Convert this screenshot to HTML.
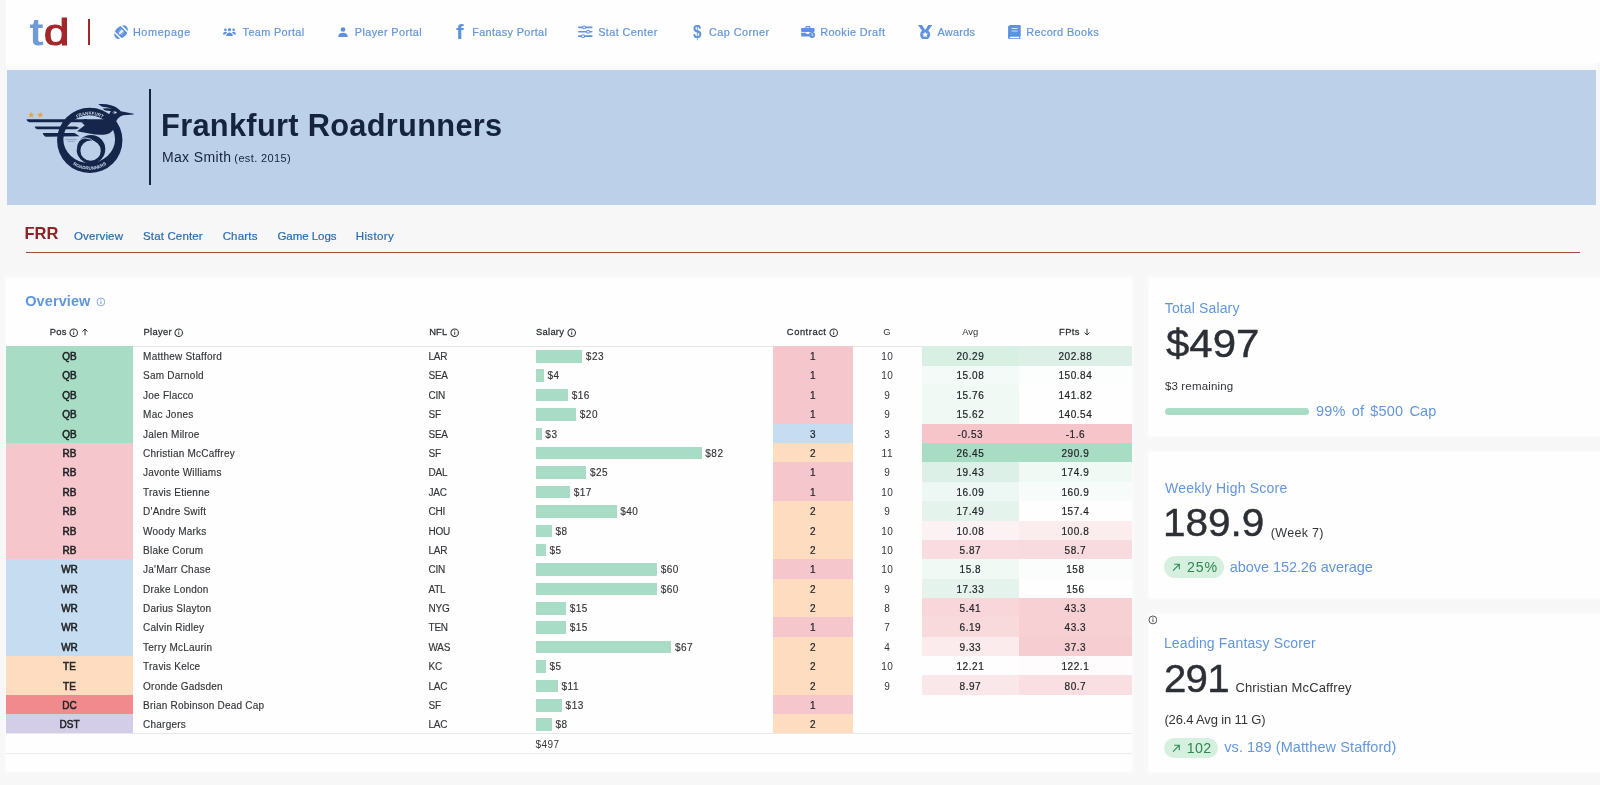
<!DOCTYPE html>
<html lang="en"><head><meta charset="utf-8"><title>Frankfurt Roadrunners</title>
<style>
html,body{margin:0;padding:0;}
body{width:1600px;height:785px;overflow:hidden;background:#f7f7f8;position:relative;font-family:"Liberation Sans",Arial,sans-serif;}
#page{position:absolute;left:0;top:0;width:1600px;height:785px;will-change:transform;}
.t{position:absolute;white-space:nowrap;display:block;}
.b{position:absolute;display:block;}
</style></head><body><div id="page">
<div class="b" style="left:6.00px;top:0.00px;width:1594.00px;height:63.00px;background:#fefefe;"></div>
<div class="b" style="left:6.00px;top:63.00px;width:1591.00px;height:6.50px;background:linear-gradient(#fdfdfd,#f9f8fa);"></div>
<span class="t" style="left:29.8px;top:8.6px;font-size:37px;line-height:48px;transform:scaleX(1.25);transform-origin:0 0;letter-spacing:0.7px;"><span style="color:#6f9ad6;-webkit-text-stroke:1px #6f9ad6">t</span><span style="color:#a3262a;-webkit-text-stroke:1px #a3262a">d</span></span>
<div class="b" style="left:88.00px;top:19.00px;width:2.00px;height:25.60px;background:#a3282a;"></div>
<span class="t" style="top:24.52px;left:132.95px;font-size:10.9px;line-height:14.17px;color:#6296dc;font-weight:normal;letter-spacing:0.570px;-webkit-text-stroke:0.2px #6296dc;">Homepage</span>
<span class="t" style="top:24.52px;left:242.60px;font-size:10.9px;line-height:14.17px;color:#6296dc;font-weight:normal;letter-spacing:0.347px;-webkit-text-stroke:0.2px #6296dc;">Team Portal</span>
<span class="t" style="top:24.52px;left:354.85px;font-size:10.9px;line-height:14.17px;color:#6296dc;font-weight:normal;letter-spacing:0.373px;-webkit-text-stroke:0.2px #6296dc;">Player Portal</span>
<span class="t" style="top:24.52px;left:472.15px;font-size:10.9px;line-height:14.17px;color:#6296dc;font-weight:normal;letter-spacing:0.346px;-webkit-text-stroke:0.2px #6296dc;">Fantasy Portal</span>
<span class="t" style="top:24.52px;left:598.15px;font-size:10.9px;line-height:14.17px;color:#6296dc;font-weight:normal;letter-spacing:0.410px;-webkit-text-stroke:0.2px #6296dc;">Stat Center</span>
<span class="t" style="top:24.52px;left:709.05px;font-size:10.9px;line-height:14.17px;color:#6296dc;font-weight:normal;letter-spacing:0.421px;-webkit-text-stroke:0.2px #6296dc;">Cap Corner</span>
<span class="t" style="top:24.52px;left:820.15px;font-size:10.9px;line-height:14.17px;color:#6296dc;font-weight:normal;letter-spacing:0.395px;-webkit-text-stroke:0.2px #6296dc;">Rookie Draft</span>
<span class="t" style="top:24.52px;left:937.50px;font-size:10.9px;line-height:14.17px;color:#6296dc;font-weight:normal;letter-spacing:0.260px;-webkit-text-stroke:0.2px #6296dc;">Awards</span>
<span class="t" style="top:24.52px;left:1026.15px;font-size:10.9px;line-height:14.17px;color:#6296dc;font-weight:normal;letter-spacing:0.376px;-webkit-text-stroke:0.2px #6296dc;">Record Books</span>
<svg class="b" style="left:113.30px;top:24.10px;" width="16.20" height="16.20" viewBox="0 0 28 28"><g transform="rotate(-45 14 14)"><ellipse cx="14" cy="14" rx="13.6" ry="9.6" fill="#5f92de"/><rect x="4.600" y="3" width="2.600" height="22" fill="#fefefe"/><rect x="20.800" y="3" width="2.600" height="22" fill="#fefefe"/><rect x="9.300" y="12.800" width="9.400" height="2.400" fill="#e8f0fb"/><rect x="10.600" y="10.600" width="1.700" height="6.800" fill="#e8f0fb"/><rect x="13.150" y="10.600" width="1.700" height="6.800" fill="#e8f0fb"/><rect x="15.700" y="10.600" width="1.700" height="6.800" fill="#e8f0fb"/></g></svg>
<svg class="b" style="left:223.00px;top:28.00px;" width="13.00" height="8.40" viewBox="0 0 26 16.800"><g fill="#5f92de"><circle cx="13" cy="3.300" r="3.100"/><path d="M6.300 16.500c0-4.600 2.700-7.300 6.700-7.300s6.700 2.700 6.700 7.300z"/><circle cx="4.700" cy="3.500" r="2.700"/><path d="M0 13.200c0-3.600 1.900-5.600 4.700-5.600 1.500 0 2.700.5 3.500 1.400-1.900 1.100-3 2.600-3.400 4.200z"/><circle cx="21.300" cy="3.500" r="2.700"/><path d="M26 13.200c0-3.600-1.900-5.600-4.700-5.600-1.500 0-2.700.5-3.500 1.400 1.900 1.100 3 2.600 3.400 4.200z"/></g></svg>
<svg class="b" style="left:338.00px;top:27.20px;" width="10.00" height="10.00" viewBox="0 0 20 20"><g fill="#5f92de"><circle cx="10" cy="5" r="4.6"/><path d="M0.500 20c0-6 3.800-8.600 9.500-8.600s9.500 2.600 9.500 8.600z"/></g></svg>
<span class="t" style="left:455.6px;top:21.1px;font-size:20.5px;line-height:22px;font-weight:bold;color:#5f92de;transform:scaleX(1.12);transform-origin:0 0">f</span>
<svg class="b" style="left:578.40px;top:25.30px;" width="14.60" height="13.50" viewBox="0 0 30 27"><g stroke="#5f92de" stroke-width="3.2" fill="none" stroke-linecap="round"><path d="M1.600 4.500h26.800M1.600 13.500h26.800M1.600 22.500h26.800"/></g><g fill="#fefefe" stroke="#5f92de" stroke-width="2.200"><circle cx="12.500" cy="4.500" r="3"/><circle cx="20.500" cy="13.500" r="3"/><circle cx="10.500" cy="22.500" r="3"/></g></svg>
<span class="t" style="left:692.6px;top:22.1px;font-size:17.8px;line-height:20px;font-weight:bold;color:#5f92de;transform:scaleX(0.86);transform-origin:0 0">$</span>
<svg class="b" style="left:801.40px;top:26.20px;" width="14.20" height="12.00" viewBox="0 0 28 24"><g fill="#5f92de"><path d="M8.500 4V2.200C8.500 1 9.400 0 10.600 0h5.800c1.200 0 2.100 1 2.100 2.200V4h-2.300V2.300h-5.400V4z"/><rect x="0" y="4" width="27" height="8" rx="2"/><path d="M0 13.500h10.500v2.500h6v-2.500h4c-3 1.500-4.500 4-4 7.500H2c-1.100 0-2-.9-2-2z"/><circle cx="22" cy="18" r="6"/></g><path d="M22 14.500v3.800l2.500 1.500" stroke="#fefefe" stroke-width="1.600" fill="none"/></svg>
<svg class="b" style="left:917.70px;top:24.60px;" width="14.30" height="14.70" viewBox="0 0 29 30"><g fill="#5f92de"><path d="M0 0h8l6.500 10-5.500 3.500z"/><path d="M29 0h-8l-6.500 10 5.500 3.500z"/><circle cx="14.500" cy="19.700" r="10.200"/></g><path d="M14.500 13.600l1.900 3.900 4.300.5-3.200 2.900.9 4.300-3.900-2.200-3.900 2.200.9-4.300-3.200-2.900 4.300-.5z" fill="#fefefe"/></svg>
<svg class="b" style="left:1008.40px;top:24.60px;" width="12.80" height="14.70" viewBox="0 0 26 30"><path fill="#5f92de" d="M5 0h19c1.100 0 2 .9 2 2v20c0 .8-.5 1.500-1.200 1.800v3.400c.7.2 1.200.8 1.200 1.400 0 .8-.6 1.400-1.400 1.400H5c-2.800 0-5-2.200-5-5V5c0-2.800 2.200-5 5-5z"/><path fill="#fefefe" d="M5 24.200h17.800v3H5c-.8 0-1.500-.7-1.500-1.500s.7-1.500 1.500-1.500z"/><rect x="7" y="6" width="13" height="2.200" rx="1" fill="#cfe0f7"/><rect x="7" y="11" width="13" height="2.200" rx="1" fill="#cfe0f7"/></svg>
<div class="b" style="left:7.00px;top:69.50px;width:1589.00px;height:135.50px;background:#bcd1e9;"></div>
<div class="b" style="left:148.50px;top:89.00px;width:2.00px;height:96.00px;background:#15233f;"></div>
<span class="t" style="top:106.38px;left:161.07px;font-size:30.8px;line-height:40.04px;color:#15233f;font-weight:bold;letter-spacing:0.288px;">Frankfurt Roadrunners</span>
<span class="t" style="top:148.10px;left:161.91px;font-size:14px;line-height:18.2px;color:#15233f;font-weight:normal;letter-spacing:0.382px;">Max Smith</span>
<span class="t" style="top:150.65px;left:234.35px;font-size:11px;line-height:14.3px;color:#15233f;font-weight:normal;letter-spacing:0.373px;">(est. 2015)</span>
<svg class="b" style="left:20px;top:95px" width="120" height="85" viewBox="0 0 1108 785">
<defs>
<path id="arcTop" d="M480,246 A240,240 0 0 1 808,246"/>
<path id="arcBot" d="M446,605 A274,274 0 0 0 842,605"/>
</defs>
<g fill="#15264a">
<!-- ring: outer circle minus inner ellipse -->
<path fill-rule="evenodd" d="M644,117 A302,302 0 1 0 644.100,721 A302,302 0 1 0 644,117 Z M639,188 A239,220 0 1 1 638.900,628 A239,220 0 1 1 639,188 Z"/>
<!-- swirl -->
<path fill-rule="evenodd" d="M655,368.500 A132.500,132.500 0 1 0 655.100,633.500 A132.500,132.500 0 1 0 655,368.500 Z M652,420 A94,94 0 1 1 651.900,608 A94,94 0 1 1 652,420 Z"/>
</g>
<path d="M693,437 Q655,398 600,396 Q548,404 528,455 Q520,480 523,505" fill="none" stroke="#bcd1e9" stroke-width="9"/>
<g fill="#15264a">
<!-- tail stripes -->
<path d="M60,223 L620,223 L620,252 L86,252 Q62,246 60,223 Z"/>
<path d="M135,291 L516,291 L549,304 L516,317 L160,317 Q138,311 135,291 Z"/>
<path d="M210,352 L503,352 L549,382 L236,385 Q212,378 210,352 Z"/>
<!-- body / neck / head / beak -->
<path d="M587,223 L775,223 Q815,200 838,152 Q855,120 890,122 Q915,128 930,150 L1050,174 Q1052,178 1046,180 L952,188 Q905,205 886,246 Q880,300 859,323 Q830,360 788,365 Q720,372 639,356 L527,334 L598,280 L565,252 L587,252 Z"/>
<!-- crest -->
<path d="M722,84 Q835,74 905,124 L868,142 Q835,112 760,108 Q740,100 722,84 Z"/>
<path d="M764,124 Q820,116 872,132 L850,152 Q815,142 790,142 Q775,136 764,124 Z"/>
</g>
<!-- eye -->
<ellipse cx="874" cy="161" rx="19" ry="9" fill="#e6edf6"/>
<circle cx="866" cy="161" r="6" fill="#15264a"/>
<!-- stars -->
<g fill="#e6a544">
<path d="M103,155 l8,19 20,2 -15,14 5,20 -18,-11 -18,11 5,-20 -15,-14 20,-2z"/>
<path d="M187,155 l8,19 20,2 -15,14 5,20 -18,-11 -18,11 5,-20 -15,-14 20,-2z"/>
</g>
<g font-family="'Liberation Sans',Arial,sans-serif" font-weight="bold" fill="#c9d9ec" text-anchor="middle">
<text font-size="40" letter-spacing="0"><textPath href="#arcTop" startOffset="50%">FRANKFURT</textPath></text>
<text font-size="42" letter-spacing="0"><textPath href="#arcBot" startOffset="50%">ROADRUNNERS</textPath></text>
</g>
<g stroke="#6d7f9f" stroke-width="5"><path d="M415,410 H525"/><path d="M440,428 H505"/></g>
</svg>

<span class="t" style="top:223.28px;left:24.47px;font-size:16.5px;line-height:21.45px;color:#8c2426;font-weight:bold;letter-spacing:-0.032px;">FRR</span>
<span class="t" style="top:228.62px;left:74.00px;font-size:11.5px;line-height:14.95px;color:#2b6cb0;font-weight:normal;letter-spacing:0.147px;-webkit-text-stroke:0.2px #2b6cb0;">Overview</span>
<span class="t" style="top:228.62px;left:143.00px;font-size:11.5px;line-height:14.95px;color:#2b6cb0;font-weight:normal;letter-spacing:0.151px;-webkit-text-stroke:0.2px #2b6cb0;">Stat Center</span>
<span class="t" style="top:228.62px;left:222.65px;font-size:11.5px;line-height:14.95px;color:#2b6cb0;font-weight:normal;letter-spacing:0.176px;-webkit-text-stroke:0.2px #2b6cb0;">Charts</span>
<span class="t" style="top:228.62px;left:277.45px;font-size:11.5px;line-height:14.95px;color:#2b6cb0;font-weight:normal;letter-spacing:-0.037px;-webkit-text-stroke:0.2px #2b6cb0;">Game Logs</span>
<span class="t" style="top:228.62px;left:355.80px;font-size:11.5px;line-height:14.95px;color:#2b6cb0;font-weight:normal;letter-spacing:0.353px;-webkit-text-stroke:0.2px #2b6cb0;">History</span>
<div class="b" style="left:25.50px;top:252.00px;width:1554.50px;height:1.00px;background:#a9463e;"></div>
<div class="b" style="left:5.60px;top:278.00px;width:1126.80px;height:493.30px;background:#fefefe;box-shadow:0 0 5px 2px rgba(254,254,254,0.75);"></div>
<div class="b" style="left:1149.00px;top:278.00px;width:455.00px;height:157.60px;background:#fefefe;box-shadow:0 0 5px 2px rgba(254,254,254,0.75);"></div>
<div class="b" style="left:1149.00px;top:452.40px;width:455.00px;height:145.20px;background:#fefefe;box-shadow:0 0 5px 2px rgba(254,254,254,0.75);"></div>
<div class="b" style="left:1149.00px;top:613.80px;width:455.00px;height:157.80px;background:#fefefe;box-shadow:0 0 5px 2px rgba(254,254,254,0.75);"></div>
<span class="t" style="top:291.97px;left:25.25px;font-size:14.5px;line-height:18.85px;color:#6296dc;font-weight:bold;letter-spacing:0.088px;">Overview</span>
<svg class="b" style="left:95.50px;top:297.10px" width="9.80" height="9.80" viewBox="0 0 20 20"><circle cx="10" cy="10" r="8" fill="none" stroke="#7ea3dc" stroke-width="1.84"/><rect x="9" y="8.800" width="2.100" height="5.600" fill="#7ea3dc"/><circle cx="10.050" cy="6.100" r="1.300" fill="#7ea3dc"/></svg>
<span class="t" style="top:326.19px;left:49.75px;font-size:9.4px;line-height:12.22px;color:#2f3237;font-weight:normal;letter-spacing:0.276px;-webkit-text-stroke:0.28px #2f3237;">Pos</span>
<svg class="b" style="left:68.90px;top:327.60px" width="9.40" height="9.40" viewBox="0 0 20 20"><circle cx="10" cy="10" r="8" fill="none" stroke="#2f3237" stroke-width="2.23"/><rect x="9" y="8.800" width="2.100" height="5.600" fill="#2f3237"/><circle cx="10.050" cy="6.100" r="1.300" fill="#2f3237"/></svg>
<svg class="b" style="left:81.9px;top:327.90px" width="6" height="8" viewBox="0 0 6 8"><path d="M3 7.300V1M0.500 3.500L3 1l2.500 2.500" fill="none" stroke="#2f3237" stroke-width="1"/></svg>
<span class="t" style="top:326.19px;left:143.45px;font-size:9.4px;line-height:12.22px;color:#2f3237;font-weight:normal;letter-spacing:0.307px;-webkit-text-stroke:0.28px #2f3237;">Player</span>
<svg class="b" style="left:173.80px;top:327.60px" width="9.40" height="9.40" viewBox="0 0 20 20"><circle cx="10" cy="10" r="8" fill="none" stroke="#2f3237" stroke-width="2.23"/><rect x="9" y="8.800" width="2.100" height="5.600" fill="#2f3237"/><circle cx="10.050" cy="6.100" r="1.300" fill="#2f3237"/></svg>
<span class="t" style="top:326.19px;left:429.25px;font-size:9.4px;line-height:12.22px;color:#2f3237;font-weight:normal;letter-spacing:0.085px;-webkit-text-stroke:0.28px #2f3237;">NFL</span>
<svg class="b" style="left:449.80px;top:327.60px" width="9.40" height="9.40" viewBox="0 0 20 20"><circle cx="10" cy="10" r="8" fill="none" stroke="#2f3237" stroke-width="2.23"/><rect x="9" y="8.800" width="2.100" height="5.600" fill="#2f3237"/><circle cx="10.050" cy="6.100" r="1.300" fill="#2f3237"/></svg>
<span class="t" style="top:326.19px;left:536.10px;font-size:9.4px;line-height:12.22px;color:#2f3237;font-weight:normal;letter-spacing:0.251px;-webkit-text-stroke:0.28px #2f3237;">Salary</span>
<svg class="b" style="left:566.50px;top:327.60px" width="9.40" height="9.40" viewBox="0 0 20 20"><circle cx="10" cy="10" r="8" fill="none" stroke="#2f3237" stroke-width="2.23"/><rect x="9" y="8.800" width="2.100" height="5.600" fill="#2f3237"/><circle cx="10.050" cy="6.100" r="1.300" fill="#2f3237"/></svg>
<span class="t" style="top:326.19px;left:786.85px;font-size:9.4px;line-height:12.22px;color:#2f3237;font-weight:normal;letter-spacing:0.527px;-webkit-text-stroke:0.28px #2f3237;">Contract</span>
<svg class="b" style="left:828.70px;top:327.60px" width="9.40" height="9.40" viewBox="0 0 20 20"><circle cx="10" cy="10" r="8" fill="none" stroke="#2f3237" stroke-width="2.23"/><rect x="9" y="8.800" width="2.100" height="5.600" fill="#2f3237"/><circle cx="10.050" cy="6.100" r="1.300" fill="#2f3237"/></svg>
<span class="t" style="top:326.19px;left:737.00px;width:300px;text-align:center;font-size:9.4px;line-height:12.22px;color:#2f3237;font-weight:normal;letter-spacing:0.000px;">G</span>
<span class="t" style="top:326.19px;left:820.20px;width:300px;text-align:center;font-size:9.4px;line-height:12.22px;color:#2f3237;font-weight:normal;letter-spacing:0.000px;">Avg</span>
<span class="t" style="top:326.19px;left:1059.05px;font-size:9.4px;line-height:12.22px;color:#2f3237;font-weight:normal;letter-spacing:0.409px;-webkit-text-stroke:0.28px #2f3237;">FPts</span>
<svg class="b" style="left:1083.8px;top:328.40px" width="6" height="8" viewBox="0 0 6 8"><path d="M3 0.700V7M0.500 4.500L3 7l2.500-2.500" fill="none" stroke="#2f3237" stroke-width="1"/></svg>
<div class="b" style="left:5.60px;top:346.00px;width:1126.40px;height:1.00px;background:#e6e6e6;"></div>
<div class="b" style="left:5.60px;top:346.00px;width:127.60px;height:20.00px;background:#a8dcc5;"></div>
<span class="t" style="top:350.00px;left:-80.50px;width:300px;text-align:center;font-size:10px;line-height:13.0px;color:#1f2226;font-weight:normal;letter-spacing:0.000px;-webkit-text-stroke:0.55px #1f2226;">QB</span>
<span class="t" style="top:350.00px;left:143.10px;font-size:10px;line-height:13.0px;color:#333539;font-weight:normal;letter-spacing:0.000px;letter-spacing:0.22px;-webkit-text-stroke:0.15px #333539;">Matthew Stafford</span>
<span class="t" style="top:350.00px;left:428.60px;font-size:10px;line-height:13.0px;color:#333539;font-weight:normal;letter-spacing:0.000px;letter-spacing:-0.3px;-webkit-text-stroke:0.15px #333539;">LAR</span>
<div class="b" style="left:535.80px;top:350.00px;width:46.55px;height:12.50px;background:#a9dcc6;"></div>
<span class="t" style="top:350.00px;left:585.85px;font-size:10px;line-height:13.0px;color:#333539;font-weight:normal;letter-spacing:0.000px;letter-spacing:0.5px;-webkit-text-stroke:0.15px #333539;">$23</span>
<div class="b" style="left:773.00px;top:346.00px;width:79.60px;height:20.00px;background:#f5c7cc;"></div>
<span class="t" style="top:350.00px;left:662.70px;width:300px;text-align:center;font-size:10px;line-height:13.0px;color:#1f2226;font-weight:normal;letter-spacing:0.000px;-webkit-text-stroke:0.22px #1f2226;">1</span>
<span class="t" style="top:350.00px;left:737.30px;width:300px;text-align:center;font-size:10px;line-height:13.0px;color:#333539;font-weight:normal;letter-spacing:0.000px;letter-spacing:0.55px;">10</span>
<div class="b" style="left:921.50px;top:346.00px;width:97.70px;height:20.00px;background:#d8efe4;"></div>
<div class="b" style="left:1019.20px;top:346.00px;width:112.50px;height:20.00px;background:#dcf0e7;"></div>
<span class="t" style="top:350.00px;left:820.40px;width:300px;text-align:center;font-size:10px;line-height:13.0px;color:#1f2226;font-weight:normal;letter-spacing:0.000px;-webkit-text-stroke:0.2px #1f2226;letter-spacing:0.55px;">20.29</span>
<span class="t" style="top:350.00px;left:925.40px;width:300px;text-align:center;font-size:10px;line-height:13.0px;color:#1f2226;font-weight:normal;letter-spacing:0.000px;-webkit-text-stroke:0.2px #1f2226;letter-spacing:0.55px;">202.88</span>
<div class="b" style="left:5.60px;top:366.00px;width:127.60px;height:19.00px;background:#a8dcc5;"></div>
<span class="t" style="top:369.39px;left:-80.50px;width:300px;text-align:center;font-size:10px;line-height:13.0px;color:#1f2226;font-weight:normal;letter-spacing:0.000px;-webkit-text-stroke:0.55px #1f2226;">QB</span>
<span class="t" style="top:369.39px;left:143.10px;font-size:10px;line-height:13.0px;color:#333539;font-weight:normal;letter-spacing:0.000px;letter-spacing:0.22px;-webkit-text-stroke:0.15px #333539;">Sam Darnold</span>
<span class="t" style="top:369.39px;left:428.60px;font-size:10px;line-height:13.0px;color:#333539;font-weight:normal;letter-spacing:0.000px;letter-spacing:-0.3px;-webkit-text-stroke:0.15px #333539;">SEA</span>
<div class="b" style="left:535.80px;top:369.39px;width:8.10px;height:12.50px;background:#a9dcc6;"></div>
<span class="t" style="top:369.39px;left:547.40px;font-size:10px;line-height:13.0px;color:#333539;font-weight:normal;letter-spacing:0.000px;letter-spacing:0.5px;-webkit-text-stroke:0.15px #333539;">$4</span>
<div class="b" style="left:773.00px;top:366.00px;width:79.60px;height:19.00px;background:#f5c7cc;"></div>
<span class="t" style="top:369.39px;left:662.70px;width:300px;text-align:center;font-size:10px;line-height:13.0px;color:#1f2226;font-weight:normal;letter-spacing:0.000px;-webkit-text-stroke:0.22px #1f2226;">1</span>
<span class="t" style="top:369.39px;left:737.30px;width:300px;text-align:center;font-size:10px;line-height:13.0px;color:#333539;font-weight:normal;letter-spacing:0.000px;letter-spacing:0.55px;">10</span>
<div class="b" style="left:921.50px;top:366.00px;width:97.70px;height:19.00px;background:#f4faf7;"></div>
<div class="b" style="left:1019.20px;top:366.00px;width:112.50px;height:19.00px;background:#fcfdfd;"></div>
<span class="t" style="top:369.39px;left:820.40px;width:300px;text-align:center;font-size:10px;line-height:13.0px;color:#1f2226;font-weight:normal;letter-spacing:0.000px;-webkit-text-stroke:0.2px #1f2226;letter-spacing:0.55px;">15.08</span>
<span class="t" style="top:369.39px;left:925.40px;width:300px;text-align:center;font-size:10px;line-height:13.0px;color:#1f2226;font-weight:normal;letter-spacing:0.000px;-webkit-text-stroke:0.2px #1f2226;letter-spacing:0.55px;">150.84</span>
<div class="b" style="left:5.60px;top:385.00px;width:127.60px;height:19.00px;background:#a8dcc5;"></div>
<span class="t" style="top:388.78px;left:-80.50px;width:300px;text-align:center;font-size:10px;line-height:13.0px;color:#1f2226;font-weight:normal;letter-spacing:0.000px;-webkit-text-stroke:0.55px #1f2226;">QB</span>
<span class="t" style="top:388.78px;left:143.10px;font-size:10px;line-height:13.0px;color:#333539;font-weight:normal;letter-spacing:0.000px;letter-spacing:0.22px;-webkit-text-stroke:0.15px #333539;">Joe Flacco</span>
<span class="t" style="top:388.78px;left:428.60px;font-size:10px;line-height:13.0px;color:#333539;font-weight:normal;letter-spacing:0.000px;letter-spacing:-0.3px;-webkit-text-stroke:0.15px #333539;">CIN</span>
<div class="b" style="left:535.80px;top:388.78px;width:32.38px;height:12.50px;background:#a9dcc6;"></div>
<span class="t" style="top:388.78px;left:571.68px;font-size:10px;line-height:13.0px;color:#333539;font-weight:normal;letter-spacing:0.000px;letter-spacing:0.5px;-webkit-text-stroke:0.15px #333539;">$16</span>
<div class="b" style="left:773.00px;top:385.00px;width:79.60px;height:19.00px;background:#f5c7cc;"></div>
<span class="t" style="top:388.78px;left:662.70px;width:300px;text-align:center;font-size:10px;line-height:13.0px;color:#1f2226;font-weight:normal;letter-spacing:0.000px;-webkit-text-stroke:0.22px #1f2226;">1</span>
<span class="t" style="top:388.78px;left:737.30px;width:300px;text-align:center;font-size:10px;line-height:13.0px;color:#333539;font-weight:normal;letter-spacing:0.000px;letter-spacing:0.55px;">9</span>
<div class="b" style="left:921.50px;top:385.00px;width:97.70px;height:19.00px;background:#f1f9f5;"></div>
<div class="b" style="left:1019.20px;top:385.00px;width:112.50px;height:19.00px;background:#fefefe;"></div>
<span class="t" style="top:388.78px;left:820.40px;width:300px;text-align:center;font-size:10px;line-height:13.0px;color:#1f2226;font-weight:normal;letter-spacing:0.000px;-webkit-text-stroke:0.2px #1f2226;letter-spacing:0.55px;">15.76</span>
<span class="t" style="top:388.78px;left:925.40px;width:300px;text-align:center;font-size:10px;line-height:13.0px;color:#1f2226;font-weight:normal;letter-spacing:0.000px;-webkit-text-stroke:0.2px #1f2226;letter-spacing:0.55px;">141.82</span>
<div class="b" style="left:5.60px;top:404.00px;width:127.60px;height:20.00px;background:#a8dcc5;"></div>
<span class="t" style="top:408.17px;left:-80.50px;width:300px;text-align:center;font-size:10px;line-height:13.0px;color:#1f2226;font-weight:normal;letter-spacing:0.000px;-webkit-text-stroke:0.55px #1f2226;">QB</span>
<span class="t" style="top:408.17px;left:143.10px;font-size:10px;line-height:13.0px;color:#333539;font-weight:normal;letter-spacing:0.000px;letter-spacing:0.22px;-webkit-text-stroke:0.15px #333539;">Mac Jones</span>
<span class="t" style="top:408.17px;left:428.60px;font-size:10px;line-height:13.0px;color:#333539;font-weight:normal;letter-spacing:0.000px;letter-spacing:-0.3px;-webkit-text-stroke:0.15px #333539;">SF</span>
<div class="b" style="left:535.80px;top:408.17px;width:40.48px;height:12.50px;background:#a9dcc6;"></div>
<span class="t" style="top:408.17px;left:579.78px;font-size:10px;line-height:13.0px;color:#333539;font-weight:normal;letter-spacing:0.000px;letter-spacing:0.5px;-webkit-text-stroke:0.15px #333539;">$20</span>
<div class="b" style="left:773.00px;top:404.00px;width:79.60px;height:20.00px;background:#f5c7cc;"></div>
<span class="t" style="top:408.17px;left:662.70px;width:300px;text-align:center;font-size:10px;line-height:13.0px;color:#1f2226;font-weight:normal;letter-spacing:0.000px;-webkit-text-stroke:0.22px #1f2226;">1</span>
<span class="t" style="top:408.17px;left:737.30px;width:300px;text-align:center;font-size:10px;line-height:13.0px;color:#333539;font-weight:normal;letter-spacing:0.000px;letter-spacing:0.55px;">9</span>
<div class="b" style="left:921.50px;top:404.00px;width:97.70px;height:20.00px;background:#f1f9f5;"></div>
<div class="b" style="left:1019.20px;top:404.00px;width:112.50px;height:20.00px;background:#fefefe;"></div>
<span class="t" style="top:408.17px;left:820.40px;width:300px;text-align:center;font-size:10px;line-height:13.0px;color:#1f2226;font-weight:normal;letter-spacing:0.000px;-webkit-text-stroke:0.2px #1f2226;letter-spacing:0.55px;">15.62</span>
<span class="t" style="top:408.17px;left:925.40px;width:300px;text-align:center;font-size:10px;line-height:13.0px;color:#1f2226;font-weight:normal;letter-spacing:0.000px;-webkit-text-stroke:0.2px #1f2226;letter-spacing:0.55px;">140.54</span>
<div class="b" style="left:5.60px;top:424.00px;width:127.60px;height:19.00px;background:#a8dcc5;"></div>
<span class="t" style="top:427.56px;left:-80.50px;width:300px;text-align:center;font-size:10px;line-height:13.0px;color:#1f2226;font-weight:normal;letter-spacing:0.000px;-webkit-text-stroke:0.55px #1f2226;">QB</span>
<span class="t" style="top:427.56px;left:143.10px;font-size:10px;line-height:13.0px;color:#333539;font-weight:normal;letter-spacing:0.000px;letter-spacing:0.22px;-webkit-text-stroke:0.15px #333539;">Jalen Milroe</span>
<span class="t" style="top:427.56px;left:428.60px;font-size:10px;line-height:13.0px;color:#333539;font-weight:normal;letter-spacing:0.000px;letter-spacing:-0.3px;-webkit-text-stroke:0.15px #333539;">SEA</span>
<div class="b" style="left:535.80px;top:427.56px;width:6.07px;height:12.50px;background:#a9dcc6;"></div>
<span class="t" style="top:427.56px;left:545.37px;font-size:10px;line-height:13.0px;color:#333539;font-weight:normal;letter-spacing:0.000px;letter-spacing:0.5px;-webkit-text-stroke:0.15px #333539;">$3</span>
<div class="b" style="left:773.00px;top:424.00px;width:79.60px;height:19.00px;background:#c6dcf1;"></div>
<span class="t" style="top:427.56px;left:662.70px;width:300px;text-align:center;font-size:10px;line-height:13.0px;color:#1f2226;font-weight:normal;letter-spacing:0.000px;-webkit-text-stroke:0.22px #1f2226;">3</span>
<span class="t" style="top:427.56px;left:737.30px;width:300px;text-align:center;font-size:10px;line-height:13.0px;color:#333539;font-weight:normal;letter-spacing:0.000px;letter-spacing:0.55px;">3</span>
<div class="b" style="left:921.50px;top:424.00px;width:97.70px;height:19.00px;background:#f5c5ca;"></div>
<div class="b" style="left:1019.20px;top:424.00px;width:112.50px;height:19.00px;background:#f5c5ca;"></div>
<span class="t" style="top:427.56px;left:820.40px;width:300px;text-align:center;font-size:10px;line-height:13.0px;color:#1f2226;font-weight:normal;letter-spacing:0.000px;-webkit-text-stroke:0.2px #1f2226;letter-spacing:0.55px;">-0.53</span>
<span class="t" style="top:427.56px;left:925.40px;width:300px;text-align:center;font-size:10px;line-height:13.0px;color:#1f2226;font-weight:normal;letter-spacing:0.000px;-webkit-text-stroke:0.2px #1f2226;letter-spacing:0.55px;">-1.6</span>
<div class="b" style="left:5.60px;top:443.00px;width:127.60px;height:19.00px;background:#f5c7cc;"></div>
<span class="t" style="top:446.95px;left:-80.50px;width:300px;text-align:center;font-size:10px;line-height:13.0px;color:#1f2226;font-weight:normal;letter-spacing:0.000px;-webkit-text-stroke:0.55px #1f2226;">RB</span>
<span class="t" style="top:446.95px;left:143.10px;font-size:10px;line-height:13.0px;color:#333539;font-weight:normal;letter-spacing:0.000px;letter-spacing:0.22px;-webkit-text-stroke:0.15px #333539;">Christian McCaffrey</span>
<span class="t" style="top:446.95px;left:428.60px;font-size:10px;line-height:13.0px;color:#333539;font-weight:normal;letter-spacing:0.000px;letter-spacing:-0.3px;-webkit-text-stroke:0.15px #333539;">SF</span>
<div class="b" style="left:535.80px;top:446.95px;width:165.97px;height:12.50px;background:#a9dcc6;"></div>
<span class="t" style="top:446.95px;left:705.27px;font-size:10px;line-height:13.0px;color:#333539;font-weight:normal;letter-spacing:0.000px;letter-spacing:0.5px;-webkit-text-stroke:0.15px #333539;">$82</span>
<div class="b" style="left:773.00px;top:443.00px;width:79.60px;height:19.00px;background:#fddcc0;"></div>
<span class="t" style="top:446.95px;left:662.70px;width:300px;text-align:center;font-size:10px;line-height:13.0px;color:#1f2226;font-weight:normal;letter-spacing:0.000px;-webkit-text-stroke:0.22px #1f2226;">2</span>
<span class="t" style="top:446.95px;left:737.30px;width:300px;text-align:center;font-size:10px;line-height:13.0px;color:#333539;font-weight:normal;letter-spacing:0.000px;letter-spacing:0.55px;">11</span>
<div class="b" style="left:921.50px;top:443.00px;width:97.70px;height:19.00px;background:#a9dcc5;"></div>
<div class="b" style="left:1019.20px;top:443.00px;width:112.50px;height:19.00px;background:#a9dcc5;"></div>
<span class="t" style="top:446.95px;left:820.40px;width:300px;text-align:center;font-size:10px;line-height:13.0px;color:#1f2226;font-weight:normal;letter-spacing:0.000px;-webkit-text-stroke:0.2px #1f2226;letter-spacing:0.55px;">26.45</span>
<span class="t" style="top:446.95px;left:925.40px;width:300px;text-align:center;font-size:10px;line-height:13.0px;color:#1f2226;font-weight:normal;letter-spacing:0.000px;-webkit-text-stroke:0.2px #1f2226;letter-spacing:0.55px;">290.9</span>
<div class="b" style="left:5.60px;top:462.00px;width:127.60px;height:20.00px;background:#f5c7cc;"></div>
<span class="t" style="top:466.34px;left:-80.50px;width:300px;text-align:center;font-size:10px;line-height:13.0px;color:#1f2226;font-weight:normal;letter-spacing:0.000px;-webkit-text-stroke:0.55px #1f2226;">RB</span>
<span class="t" style="top:466.34px;left:143.10px;font-size:10px;line-height:13.0px;color:#333539;font-weight:normal;letter-spacing:0.000px;letter-spacing:0.22px;-webkit-text-stroke:0.15px #333539;">Javonte Williams</span>
<span class="t" style="top:466.34px;left:428.60px;font-size:10px;line-height:13.0px;color:#333539;font-weight:normal;letter-spacing:0.000px;letter-spacing:-0.3px;-webkit-text-stroke:0.15px #333539;">DAL</span>
<div class="b" style="left:535.80px;top:466.34px;width:50.60px;height:12.50px;background:#a9dcc6;"></div>
<span class="t" style="top:466.34px;left:589.90px;font-size:10px;line-height:13.0px;color:#333539;font-weight:normal;letter-spacing:0.000px;letter-spacing:0.5px;-webkit-text-stroke:0.15px #333539;">$25</span>
<div class="b" style="left:773.00px;top:462.00px;width:79.60px;height:20.00px;background:#f5c7cc;"></div>
<span class="t" style="top:466.34px;left:662.70px;width:300px;text-align:center;font-size:10px;line-height:13.0px;color:#1f2226;font-weight:normal;letter-spacing:0.000px;-webkit-text-stroke:0.22px #1f2226;">1</span>
<span class="t" style="top:466.34px;left:737.30px;width:300px;text-align:center;font-size:10px;line-height:13.0px;color:#333539;font-weight:normal;letter-spacing:0.000px;letter-spacing:0.55px;">9</span>
<div class="b" style="left:921.50px;top:462.00px;width:97.70px;height:20.00px;background:#dcf0e7;"></div>
<div class="b" style="left:1019.20px;top:462.00px;width:112.50px;height:20.00px;background:#f1f9f5;"></div>
<span class="t" style="top:466.34px;left:820.40px;width:300px;text-align:center;font-size:10px;line-height:13.0px;color:#1f2226;font-weight:normal;letter-spacing:0.000px;-webkit-text-stroke:0.2px #1f2226;letter-spacing:0.55px;">19.43</span>
<span class="t" style="top:466.34px;left:925.40px;width:300px;text-align:center;font-size:10px;line-height:13.0px;color:#1f2226;font-weight:normal;letter-spacing:0.000px;-webkit-text-stroke:0.2px #1f2226;letter-spacing:0.55px;">174.9</span>
<div class="b" style="left:5.60px;top:482.00px;width:127.60px;height:19.00px;background:#f5c7cc;"></div>
<span class="t" style="top:485.73px;left:-80.50px;width:300px;text-align:center;font-size:10px;line-height:13.0px;color:#1f2226;font-weight:normal;letter-spacing:0.000px;-webkit-text-stroke:0.55px #1f2226;">RB</span>
<span class="t" style="top:485.73px;left:143.10px;font-size:10px;line-height:13.0px;color:#333539;font-weight:normal;letter-spacing:0.000px;letter-spacing:0.22px;-webkit-text-stroke:0.15px #333539;">Travis Etienne</span>
<span class="t" style="top:485.73px;left:428.60px;font-size:10px;line-height:13.0px;color:#333539;font-weight:normal;letter-spacing:0.000px;letter-spacing:-0.3px;-webkit-text-stroke:0.15px #333539;">JAC</span>
<div class="b" style="left:535.80px;top:485.73px;width:34.41px;height:12.50px;background:#a9dcc6;"></div>
<span class="t" style="top:485.73px;left:573.71px;font-size:10px;line-height:13.0px;color:#333539;font-weight:normal;letter-spacing:0.000px;letter-spacing:0.5px;-webkit-text-stroke:0.15px #333539;">$17</span>
<div class="b" style="left:773.00px;top:482.00px;width:79.60px;height:19.00px;background:#f5c7cc;"></div>
<span class="t" style="top:485.73px;left:662.70px;width:300px;text-align:center;font-size:10px;line-height:13.0px;color:#1f2226;font-weight:normal;letter-spacing:0.000px;-webkit-text-stroke:0.22px #1f2226;">1</span>
<span class="t" style="top:485.73px;left:737.30px;width:300px;text-align:center;font-size:10px;line-height:13.0px;color:#333539;font-weight:normal;letter-spacing:0.000px;letter-spacing:0.55px;">10</span>
<div class="b" style="left:921.50px;top:482.00px;width:97.70px;height:19.00px;background:#edf7f3;"></div>
<div class="b" style="left:1019.20px;top:482.00px;width:112.50px;height:19.00px;background:#f7fbf9;"></div>
<span class="t" style="top:485.73px;left:820.40px;width:300px;text-align:center;font-size:10px;line-height:13.0px;color:#1f2226;font-weight:normal;letter-spacing:0.000px;-webkit-text-stroke:0.2px #1f2226;letter-spacing:0.55px;">16.09</span>
<span class="t" style="top:485.73px;left:925.40px;width:300px;text-align:center;font-size:10px;line-height:13.0px;color:#1f2226;font-weight:normal;letter-spacing:0.000px;-webkit-text-stroke:0.2px #1f2226;letter-spacing:0.55px;">160.9</span>
<div class="b" style="left:5.60px;top:501.00px;width:127.60px;height:20.00px;background:#f5c7cc;"></div>
<span class="t" style="top:505.12px;left:-80.50px;width:300px;text-align:center;font-size:10px;line-height:13.0px;color:#1f2226;font-weight:normal;letter-spacing:0.000px;-webkit-text-stroke:0.55px #1f2226;">RB</span>
<span class="t" style="top:505.12px;left:143.10px;font-size:10px;line-height:13.0px;color:#333539;font-weight:normal;letter-spacing:0.000px;letter-spacing:0.22px;-webkit-text-stroke:0.15px #333539;">D'Andre Swift</span>
<span class="t" style="top:505.12px;left:428.60px;font-size:10px;line-height:13.0px;color:#333539;font-weight:normal;letter-spacing:0.000px;letter-spacing:-0.3px;-webkit-text-stroke:0.15px #333539;">CHI</span>
<div class="b" style="left:535.80px;top:505.12px;width:80.96px;height:12.50px;background:#a9dcc6;"></div>
<span class="t" style="top:505.12px;left:620.26px;font-size:10px;line-height:13.0px;color:#333539;font-weight:normal;letter-spacing:0.000px;letter-spacing:0.5px;-webkit-text-stroke:0.15px #333539;">$40</span>
<div class="b" style="left:773.00px;top:501.00px;width:79.60px;height:20.00px;background:#fddcc0;"></div>
<span class="t" style="top:505.12px;left:662.70px;width:300px;text-align:center;font-size:10px;line-height:13.0px;color:#1f2226;font-weight:normal;letter-spacing:0.000px;-webkit-text-stroke:0.22px #1f2226;">2</span>
<span class="t" style="top:505.12px;left:737.30px;width:300px;text-align:center;font-size:10px;line-height:13.0px;color:#333539;font-weight:normal;letter-spacing:0.000px;letter-spacing:0.55px;">9</span>
<div class="b" style="left:921.50px;top:501.00px;width:97.70px;height:20.00px;background:#e4f4ed;"></div>
<div class="b" style="left:1019.20px;top:501.00px;width:112.50px;height:20.00px;background:#fdfefd;"></div>
<span class="t" style="top:505.12px;left:820.40px;width:300px;text-align:center;font-size:10px;line-height:13.0px;color:#1f2226;font-weight:normal;letter-spacing:0.000px;-webkit-text-stroke:0.2px #1f2226;letter-spacing:0.55px;">17.49</span>
<span class="t" style="top:505.12px;left:925.40px;width:300px;text-align:center;font-size:10px;line-height:13.0px;color:#1f2226;font-weight:normal;letter-spacing:0.000px;-webkit-text-stroke:0.2px #1f2226;letter-spacing:0.55px;">157.4</span>
<div class="b" style="left:5.60px;top:521.00px;width:127.60px;height:19.00px;background:#f5c7cc;"></div>
<span class="t" style="top:524.51px;left:-80.50px;width:300px;text-align:center;font-size:10px;line-height:13.0px;color:#1f2226;font-weight:normal;letter-spacing:0.000px;-webkit-text-stroke:0.55px #1f2226;">RB</span>
<span class="t" style="top:524.51px;left:143.10px;font-size:10px;line-height:13.0px;color:#333539;font-weight:normal;letter-spacing:0.000px;letter-spacing:0.22px;-webkit-text-stroke:0.15px #333539;">Woody Marks</span>
<span class="t" style="top:524.51px;left:428.60px;font-size:10px;line-height:13.0px;color:#333539;font-weight:normal;letter-spacing:0.000px;letter-spacing:-0.3px;-webkit-text-stroke:0.15px #333539;">HOU</span>
<div class="b" style="left:535.80px;top:524.51px;width:16.19px;height:12.50px;background:#a9dcc6;"></div>
<span class="t" style="top:524.51px;left:555.49px;font-size:10px;line-height:13.0px;color:#333539;font-weight:normal;letter-spacing:0.000px;letter-spacing:0.5px;-webkit-text-stroke:0.15px #333539;">$8</span>
<div class="b" style="left:773.00px;top:521.00px;width:79.60px;height:19.00px;background:#fddcc0;"></div>
<span class="t" style="top:524.51px;left:662.70px;width:300px;text-align:center;font-size:10px;line-height:13.0px;color:#1f2226;font-weight:normal;letter-spacing:0.000px;-webkit-text-stroke:0.22px #1f2226;">2</span>
<span class="t" style="top:524.51px;left:737.30px;width:300px;text-align:center;font-size:10px;line-height:13.0px;color:#333539;font-weight:normal;letter-spacing:0.000px;letter-spacing:0.55px;">10</span>
<div class="b" style="left:921.50px;top:521.00px;width:97.70px;height:19.00px;background:#fcf1f3;"></div>
<div class="b" style="left:1019.20px;top:521.00px;width:112.50px;height:19.00px;background:#fbedee;"></div>
<span class="t" style="top:524.51px;left:820.40px;width:300px;text-align:center;font-size:10px;line-height:13.0px;color:#1f2226;font-weight:normal;letter-spacing:0.000px;-webkit-text-stroke:0.2px #1f2226;letter-spacing:0.55px;">10.08</span>
<span class="t" style="top:524.51px;left:925.40px;width:300px;text-align:center;font-size:10px;line-height:13.0px;color:#1f2226;font-weight:normal;letter-spacing:0.000px;-webkit-text-stroke:0.2px #1f2226;letter-spacing:0.55px;">100.8</span>
<div class="b" style="left:5.60px;top:540.00px;width:127.60px;height:19.00px;background:#f5c7cc;"></div>
<span class="t" style="top:543.90px;left:-80.50px;width:300px;text-align:center;font-size:10px;line-height:13.0px;color:#1f2226;font-weight:normal;letter-spacing:0.000px;-webkit-text-stroke:0.55px #1f2226;">RB</span>
<span class="t" style="top:543.90px;left:143.10px;font-size:10px;line-height:13.0px;color:#333539;font-weight:normal;letter-spacing:0.000px;letter-spacing:0.22px;-webkit-text-stroke:0.15px #333539;">Blake Corum</span>
<span class="t" style="top:543.90px;left:428.60px;font-size:10px;line-height:13.0px;color:#333539;font-weight:normal;letter-spacing:0.000px;letter-spacing:-0.3px;-webkit-text-stroke:0.15px #333539;">LAR</span>
<div class="b" style="left:535.80px;top:543.90px;width:10.12px;height:12.50px;background:#a9dcc6;"></div>
<span class="t" style="top:543.90px;left:549.42px;font-size:10px;line-height:13.0px;color:#333539;font-weight:normal;letter-spacing:0.000px;letter-spacing:0.5px;-webkit-text-stroke:0.15px #333539;">$5</span>
<div class="b" style="left:773.00px;top:540.00px;width:79.60px;height:19.00px;background:#fddcc0;"></div>
<span class="t" style="top:543.90px;left:662.70px;width:300px;text-align:center;font-size:10px;line-height:13.0px;color:#1f2226;font-weight:normal;letter-spacing:0.000px;-webkit-text-stroke:0.22px #1f2226;">2</span>
<span class="t" style="top:543.90px;left:737.30px;width:300px;text-align:center;font-size:10px;line-height:13.0px;color:#333539;font-weight:normal;letter-spacing:0.000px;letter-spacing:0.55px;">10</span>
<div class="b" style="left:921.50px;top:540.00px;width:97.70px;height:19.00px;background:#f9dcdf;"></div>
<div class="b" style="left:1019.20px;top:540.00px;width:112.50px;height:19.00px;background:#f8dbde;"></div>
<span class="t" style="top:543.90px;left:820.40px;width:300px;text-align:center;font-size:10px;line-height:13.0px;color:#1f2226;font-weight:normal;letter-spacing:0.000px;-webkit-text-stroke:0.2px #1f2226;letter-spacing:0.55px;">5.87</span>
<span class="t" style="top:543.90px;left:925.40px;width:300px;text-align:center;font-size:10px;line-height:13.0px;color:#1f2226;font-weight:normal;letter-spacing:0.000px;-webkit-text-stroke:0.2px #1f2226;letter-spacing:0.55px;">58.7</span>
<div class="b" style="left:5.60px;top:559.00px;width:127.60px;height:20.00px;background:#c6dcf1;"></div>
<span class="t" style="top:563.29px;left:-80.50px;width:300px;text-align:center;font-size:10px;line-height:13.0px;color:#1f2226;font-weight:normal;letter-spacing:0.000px;-webkit-text-stroke:0.55px #1f2226;">WR</span>
<span class="t" style="top:563.29px;left:143.10px;font-size:10px;line-height:13.0px;color:#333539;font-weight:normal;letter-spacing:0.000px;letter-spacing:0.22px;-webkit-text-stroke:0.15px #333539;">Ja'Marr Chase</span>
<span class="t" style="top:563.29px;left:428.60px;font-size:10px;line-height:13.0px;color:#333539;font-weight:normal;letter-spacing:0.000px;letter-spacing:-0.3px;-webkit-text-stroke:0.15px #333539;">CIN</span>
<div class="b" style="left:535.80px;top:563.29px;width:121.44px;height:12.50px;background:#a9dcc6;"></div>
<span class="t" style="top:563.29px;left:660.74px;font-size:10px;line-height:13.0px;color:#333539;font-weight:normal;letter-spacing:0.000px;letter-spacing:0.5px;-webkit-text-stroke:0.15px #333539;">$60</span>
<div class="b" style="left:773.00px;top:559.00px;width:79.60px;height:20.00px;background:#f5c7cc;"></div>
<span class="t" style="top:563.29px;left:662.70px;width:300px;text-align:center;font-size:10px;line-height:13.0px;color:#1f2226;font-weight:normal;letter-spacing:0.000px;-webkit-text-stroke:0.22px #1f2226;">1</span>
<span class="t" style="top:563.29px;left:737.30px;width:300px;text-align:center;font-size:10px;line-height:13.0px;color:#333539;font-weight:normal;letter-spacing:0.000px;letter-spacing:0.55px;">10</span>
<div class="b" style="left:921.50px;top:559.00px;width:97.70px;height:20.00px;background:#f1f9f5;"></div>
<div class="b" style="left:1019.20px;top:559.00px;width:112.50px;height:20.00px;background:#fbfdfc;"></div>
<span class="t" style="top:563.29px;left:820.40px;width:300px;text-align:center;font-size:10px;line-height:13.0px;color:#1f2226;font-weight:normal;letter-spacing:0.000px;-webkit-text-stroke:0.2px #1f2226;letter-spacing:0.55px;">15.8</span>
<span class="t" style="top:563.29px;left:925.40px;width:300px;text-align:center;font-size:10px;line-height:13.0px;color:#1f2226;font-weight:normal;letter-spacing:0.000px;-webkit-text-stroke:0.2px #1f2226;letter-spacing:0.55px;">158</span>
<div class="b" style="left:5.60px;top:579.00px;width:127.60px;height:19.00px;background:#c6dcf1;"></div>
<span class="t" style="top:582.68px;left:-80.50px;width:300px;text-align:center;font-size:10px;line-height:13.0px;color:#1f2226;font-weight:normal;letter-spacing:0.000px;-webkit-text-stroke:0.55px #1f2226;">WR</span>
<span class="t" style="top:582.68px;left:143.10px;font-size:10px;line-height:13.0px;color:#333539;font-weight:normal;letter-spacing:0.000px;letter-spacing:0.22px;-webkit-text-stroke:0.15px #333539;">Drake London</span>
<span class="t" style="top:582.68px;left:428.60px;font-size:10px;line-height:13.0px;color:#333539;font-weight:normal;letter-spacing:0.000px;letter-spacing:-0.3px;-webkit-text-stroke:0.15px #333539;">ATL</span>
<div class="b" style="left:535.80px;top:582.68px;width:121.44px;height:12.50px;background:#a9dcc6;"></div>
<span class="t" style="top:582.68px;left:660.74px;font-size:10px;line-height:13.0px;color:#333539;font-weight:normal;letter-spacing:0.000px;letter-spacing:0.5px;-webkit-text-stroke:0.15px #333539;">$60</span>
<div class="b" style="left:773.00px;top:579.00px;width:79.60px;height:19.00px;background:#fddcc0;"></div>
<span class="t" style="top:582.68px;left:662.70px;width:300px;text-align:center;font-size:10px;line-height:13.0px;color:#1f2226;font-weight:normal;letter-spacing:0.000px;-webkit-text-stroke:0.22px #1f2226;">2</span>
<span class="t" style="top:582.68px;left:737.30px;width:300px;text-align:center;font-size:10px;line-height:13.0px;color:#333539;font-weight:normal;letter-spacing:0.000px;letter-spacing:0.55px;">9</span>
<div class="b" style="left:921.50px;top:579.00px;width:97.70px;height:19.00px;background:#e4f4ed;"></div>
<div class="b" style="left:1019.20px;top:579.00px;width:112.50px;height:19.00px;background:#fefefe;"></div>
<span class="t" style="top:582.68px;left:820.40px;width:300px;text-align:center;font-size:10px;line-height:13.0px;color:#1f2226;font-weight:normal;letter-spacing:0.000px;-webkit-text-stroke:0.2px #1f2226;letter-spacing:0.55px;">17.33</span>
<span class="t" style="top:582.68px;left:925.40px;width:300px;text-align:center;font-size:10px;line-height:13.0px;color:#1f2226;font-weight:normal;letter-spacing:0.000px;-webkit-text-stroke:0.2px #1f2226;letter-spacing:0.55px;">156</span>
<div class="b" style="left:5.60px;top:598.00px;width:127.60px;height:19.00px;background:#c6dcf1;"></div>
<span class="t" style="top:602.07px;left:-80.50px;width:300px;text-align:center;font-size:10px;line-height:13.0px;color:#1f2226;font-weight:normal;letter-spacing:0.000px;-webkit-text-stroke:0.55px #1f2226;">WR</span>
<span class="t" style="top:602.07px;left:143.10px;font-size:10px;line-height:13.0px;color:#333539;font-weight:normal;letter-spacing:0.000px;letter-spacing:0.22px;-webkit-text-stroke:0.15px #333539;">Darius Slayton</span>
<span class="t" style="top:602.07px;left:428.60px;font-size:10px;line-height:13.0px;color:#333539;font-weight:normal;letter-spacing:0.000px;letter-spacing:-0.3px;-webkit-text-stroke:0.15px #333539;">NYG</span>
<div class="b" style="left:535.80px;top:602.07px;width:30.36px;height:12.50px;background:#a9dcc6;"></div>
<span class="t" style="top:602.07px;left:569.66px;font-size:10px;line-height:13.0px;color:#333539;font-weight:normal;letter-spacing:0.000px;letter-spacing:0.5px;-webkit-text-stroke:0.15px #333539;">$15</span>
<div class="b" style="left:773.00px;top:598.00px;width:79.60px;height:19.00px;background:#fddcc0;"></div>
<span class="t" style="top:602.07px;left:662.70px;width:300px;text-align:center;font-size:10px;line-height:13.0px;color:#1f2226;font-weight:normal;letter-spacing:0.000px;-webkit-text-stroke:0.22px #1f2226;">2</span>
<span class="t" style="top:602.07px;left:737.30px;width:300px;text-align:center;font-size:10px;line-height:13.0px;color:#333539;font-weight:normal;letter-spacing:0.000px;letter-spacing:0.55px;">8</span>
<div class="b" style="left:921.50px;top:598.00px;width:97.70px;height:19.00px;background:#f8d6da;"></div>
<div class="b" style="left:1019.20px;top:598.00px;width:112.50px;height:19.00px;background:#f7d0d4;"></div>
<span class="t" style="top:602.07px;left:820.40px;width:300px;text-align:center;font-size:10px;line-height:13.0px;color:#1f2226;font-weight:normal;letter-spacing:0.000px;-webkit-text-stroke:0.2px #1f2226;letter-spacing:0.55px;">5.41</span>
<span class="t" style="top:602.07px;left:925.40px;width:300px;text-align:center;font-size:10px;line-height:13.0px;color:#1f2226;font-weight:normal;letter-spacing:0.000px;-webkit-text-stroke:0.2px #1f2226;letter-spacing:0.55px;">43.3</span>
<div class="b" style="left:5.60px;top:617.00px;width:127.60px;height:20.00px;background:#c6dcf1;"></div>
<span class="t" style="top:621.46px;left:-80.50px;width:300px;text-align:center;font-size:10px;line-height:13.0px;color:#1f2226;font-weight:normal;letter-spacing:0.000px;-webkit-text-stroke:0.55px #1f2226;">WR</span>
<span class="t" style="top:621.46px;left:143.10px;font-size:10px;line-height:13.0px;color:#333539;font-weight:normal;letter-spacing:0.000px;letter-spacing:0.22px;-webkit-text-stroke:0.15px #333539;">Calvin Ridley</span>
<span class="t" style="top:621.46px;left:428.60px;font-size:10px;line-height:13.0px;color:#333539;font-weight:normal;letter-spacing:0.000px;letter-spacing:-0.3px;-webkit-text-stroke:0.15px #333539;">TEN</span>
<div class="b" style="left:535.80px;top:621.46px;width:30.36px;height:12.50px;background:#a9dcc6;"></div>
<span class="t" style="top:621.46px;left:569.66px;font-size:10px;line-height:13.0px;color:#333539;font-weight:normal;letter-spacing:0.000px;letter-spacing:0.5px;-webkit-text-stroke:0.15px #333539;">$15</span>
<div class="b" style="left:773.00px;top:617.00px;width:79.60px;height:20.00px;background:#f5c7cc;"></div>
<span class="t" style="top:621.46px;left:662.70px;width:300px;text-align:center;font-size:10px;line-height:13.0px;color:#1f2226;font-weight:normal;letter-spacing:0.000px;-webkit-text-stroke:0.22px #1f2226;">1</span>
<span class="t" style="top:621.46px;left:737.30px;width:300px;text-align:center;font-size:10px;line-height:13.0px;color:#333539;font-weight:normal;letter-spacing:0.000px;letter-spacing:0.55px;">7</span>
<div class="b" style="left:921.50px;top:617.00px;width:97.70px;height:20.00px;background:#f8dadd;"></div>
<div class="b" style="left:1019.20px;top:617.00px;width:112.50px;height:20.00px;background:#f7d0d4;"></div>
<span class="t" style="top:621.46px;left:820.40px;width:300px;text-align:center;font-size:10px;line-height:13.0px;color:#1f2226;font-weight:normal;letter-spacing:0.000px;-webkit-text-stroke:0.2px #1f2226;letter-spacing:0.55px;">6.19</span>
<span class="t" style="top:621.46px;left:925.40px;width:300px;text-align:center;font-size:10px;line-height:13.0px;color:#1f2226;font-weight:normal;letter-spacing:0.000px;-webkit-text-stroke:0.2px #1f2226;letter-spacing:0.55px;">43.3</span>
<div class="b" style="left:5.60px;top:637.00px;width:127.60px;height:19.00px;background:#c6dcf1;"></div>
<span class="t" style="top:640.85px;left:-80.50px;width:300px;text-align:center;font-size:10px;line-height:13.0px;color:#1f2226;font-weight:normal;letter-spacing:0.000px;-webkit-text-stroke:0.55px #1f2226;">WR</span>
<span class="t" style="top:640.85px;left:143.10px;font-size:10px;line-height:13.0px;color:#333539;font-weight:normal;letter-spacing:0.000px;letter-spacing:0.22px;-webkit-text-stroke:0.15px #333539;">Terry McLaurin</span>
<span class="t" style="top:640.85px;left:428.60px;font-size:10px;line-height:13.0px;color:#333539;font-weight:normal;letter-spacing:0.000px;letter-spacing:-0.3px;-webkit-text-stroke:0.15px #333539;">WAS</span>
<div class="b" style="left:535.80px;top:640.85px;width:135.61px;height:12.50px;background:#a9dcc6;"></div>
<span class="t" style="top:640.85px;left:674.91px;font-size:10px;line-height:13.0px;color:#333539;font-weight:normal;letter-spacing:0.000px;letter-spacing:0.5px;-webkit-text-stroke:0.15px #333539;">$67</span>
<div class="b" style="left:773.00px;top:637.00px;width:79.60px;height:19.00px;background:#fddcc0;"></div>
<span class="t" style="top:640.85px;left:662.70px;width:300px;text-align:center;font-size:10px;line-height:13.0px;color:#1f2226;font-weight:normal;letter-spacing:0.000px;-webkit-text-stroke:0.22px #1f2226;">2</span>
<span class="t" style="top:640.85px;left:737.30px;width:300px;text-align:center;font-size:10px;line-height:13.0px;color:#333539;font-weight:normal;letter-spacing:0.000px;letter-spacing:0.55px;">4</span>
<div class="b" style="left:921.50px;top:637.00px;width:97.70px;height:19.00px;background:#fbebed;"></div>
<div class="b" style="left:1019.20px;top:637.00px;width:112.50px;height:19.00px;background:#f6ced2;"></div>
<span class="t" style="top:640.85px;left:820.40px;width:300px;text-align:center;font-size:10px;line-height:13.0px;color:#1f2226;font-weight:normal;letter-spacing:0.000px;-webkit-text-stroke:0.2px #1f2226;letter-spacing:0.55px;">9.33</span>
<span class="t" style="top:640.85px;left:925.40px;width:300px;text-align:center;font-size:10px;line-height:13.0px;color:#1f2226;font-weight:normal;letter-spacing:0.000px;-webkit-text-stroke:0.2px #1f2226;letter-spacing:0.55px;">37.3</span>
<div class="b" style="left:5.60px;top:656.00px;width:127.60px;height:19.00px;background:#fddcc0;"></div>
<span class="t" style="top:660.24px;left:-80.50px;width:300px;text-align:center;font-size:10px;line-height:13.0px;color:#1f2226;font-weight:normal;letter-spacing:0.000px;-webkit-text-stroke:0.55px #1f2226;">TE</span>
<span class="t" style="top:660.24px;left:143.10px;font-size:10px;line-height:13.0px;color:#333539;font-weight:normal;letter-spacing:0.000px;letter-spacing:0.22px;-webkit-text-stroke:0.15px #333539;">Travis Kelce</span>
<span class="t" style="top:660.24px;left:428.60px;font-size:10px;line-height:13.0px;color:#333539;font-weight:normal;letter-spacing:0.000px;letter-spacing:-0.3px;-webkit-text-stroke:0.15px #333539;">KC</span>
<div class="b" style="left:535.80px;top:660.24px;width:10.12px;height:12.50px;background:#a9dcc6;"></div>
<span class="t" style="top:660.24px;left:549.42px;font-size:10px;line-height:13.0px;color:#333539;font-weight:normal;letter-spacing:0.000px;letter-spacing:0.5px;-webkit-text-stroke:0.15px #333539;">$5</span>
<div class="b" style="left:773.00px;top:656.00px;width:79.60px;height:19.00px;background:#fddcc0;"></div>
<span class="t" style="top:660.24px;left:662.70px;width:300px;text-align:center;font-size:10px;line-height:13.0px;color:#1f2226;font-weight:normal;letter-spacing:0.000px;-webkit-text-stroke:0.22px #1f2226;">2</span>
<span class="t" style="top:660.24px;left:737.30px;width:300px;text-align:center;font-size:10px;line-height:13.0px;color:#333539;font-weight:normal;letter-spacing:0.000px;letter-spacing:0.55px;">10</span>
<div class="b" style="left:921.50px;top:656.00px;width:97.70px;height:19.00px;background:#fefefe;"></div>
<div class="b" style="left:1019.20px;top:656.00px;width:112.50px;height:19.00px;background:#fefcfc;"></div>
<span class="t" style="top:660.24px;left:820.40px;width:300px;text-align:center;font-size:10px;line-height:13.0px;color:#1f2226;font-weight:normal;letter-spacing:0.000px;-webkit-text-stroke:0.2px #1f2226;letter-spacing:0.55px;">12.21</span>
<span class="t" style="top:660.24px;left:925.40px;width:300px;text-align:center;font-size:10px;line-height:13.0px;color:#1f2226;font-weight:normal;letter-spacing:0.000px;-webkit-text-stroke:0.2px #1f2226;letter-spacing:0.55px;">122.1</span>
<div class="b" style="left:5.60px;top:675.00px;width:127.60px;height:20.00px;background:#fddcc0;"></div>
<span class="t" style="top:679.63px;left:-80.50px;width:300px;text-align:center;font-size:10px;line-height:13.0px;color:#1f2226;font-weight:normal;letter-spacing:0.000px;-webkit-text-stroke:0.55px #1f2226;">TE</span>
<span class="t" style="top:679.63px;left:143.10px;font-size:10px;line-height:13.0px;color:#333539;font-weight:normal;letter-spacing:0.000px;letter-spacing:0.22px;-webkit-text-stroke:0.15px #333539;">Oronde Gadsden</span>
<span class="t" style="top:679.63px;left:428.60px;font-size:10px;line-height:13.0px;color:#333539;font-weight:normal;letter-spacing:0.000px;letter-spacing:-0.3px;-webkit-text-stroke:0.15px #333539;">LAC</span>
<div class="b" style="left:535.80px;top:679.63px;width:22.26px;height:12.50px;background:#a9dcc6;"></div>
<span class="t" style="top:679.63px;left:561.56px;font-size:10px;line-height:13.0px;color:#333539;font-weight:normal;letter-spacing:0.000px;letter-spacing:0.5px;-webkit-text-stroke:0.15px #333539;">$11</span>
<div class="b" style="left:773.00px;top:675.00px;width:79.60px;height:20.00px;background:#fddcc0;"></div>
<span class="t" style="top:679.63px;left:662.70px;width:300px;text-align:center;font-size:10px;line-height:13.0px;color:#1f2226;font-weight:normal;letter-spacing:0.000px;-webkit-text-stroke:0.22px #1f2226;">2</span>
<span class="t" style="top:679.63px;left:737.30px;width:300px;text-align:center;font-size:10px;line-height:13.0px;color:#333539;font-weight:normal;letter-spacing:0.000px;letter-spacing:0.55px;">9</span>
<div class="b" style="left:921.50px;top:675.00px;width:97.70px;height:20.00px;background:#fae7e9;"></div>
<div class="b" style="left:1019.20px;top:675.00px;width:112.50px;height:20.00px;background:#f9dfe1;"></div>
<span class="t" style="top:679.63px;left:820.40px;width:300px;text-align:center;font-size:10px;line-height:13.0px;color:#1f2226;font-weight:normal;letter-spacing:0.000px;-webkit-text-stroke:0.2px #1f2226;letter-spacing:0.55px;">8.97</span>
<span class="t" style="top:679.63px;left:925.40px;width:300px;text-align:center;font-size:10px;line-height:13.0px;color:#1f2226;font-weight:normal;letter-spacing:0.000px;-webkit-text-stroke:0.2px #1f2226;letter-spacing:0.55px;">80.7</span>
<div class="b" style="left:5.60px;top:695.00px;width:127.60px;height:19.00px;background:#f08a8c;"></div>
<span class="t" style="top:699.02px;left:-80.50px;width:300px;text-align:center;font-size:10px;line-height:13.0px;color:#1f2226;font-weight:normal;letter-spacing:0.000px;-webkit-text-stroke:0.55px #1f2226;">DC</span>
<span class="t" style="top:699.02px;left:143.10px;font-size:10px;line-height:13.0px;color:#333539;font-weight:normal;letter-spacing:0.000px;letter-spacing:0.22px;-webkit-text-stroke:0.15px #333539;">Brian Robinson Dead Cap</span>
<span class="t" style="top:699.02px;left:428.60px;font-size:10px;line-height:13.0px;color:#333539;font-weight:normal;letter-spacing:0.000px;letter-spacing:-0.3px;-webkit-text-stroke:0.15px #333539;">SF</span>
<div class="b" style="left:535.80px;top:699.02px;width:26.31px;height:12.50px;background:#a9dcc6;"></div>
<span class="t" style="top:699.02px;left:565.61px;font-size:10px;line-height:13.0px;color:#333539;font-weight:normal;letter-spacing:0.000px;letter-spacing:0.5px;-webkit-text-stroke:0.15px #333539;">$13</span>
<div class="b" style="left:773.00px;top:695.00px;width:79.60px;height:19.00px;background:#f5c7cc;"></div>
<span class="t" style="top:699.02px;left:662.70px;width:300px;text-align:center;font-size:10px;line-height:13.0px;color:#1f2226;font-weight:normal;letter-spacing:0.000px;-webkit-text-stroke:0.22px #1f2226;">1</span>
<div class="b" style="left:5.60px;top:714.00px;width:127.60px;height:19.00px;background:#d4cde8;"></div>
<span class="t" style="top:718.41px;left:-80.50px;width:300px;text-align:center;font-size:10px;line-height:13.0px;color:#1f2226;font-weight:normal;letter-spacing:0.000px;-webkit-text-stroke:0.55px #1f2226;">DST</span>
<span class="t" style="top:718.41px;left:143.10px;font-size:10px;line-height:13.0px;color:#333539;font-weight:normal;letter-spacing:0.000px;letter-spacing:0.22px;-webkit-text-stroke:0.15px #333539;">Chargers</span>
<span class="t" style="top:718.41px;left:428.60px;font-size:10px;line-height:13.0px;color:#333539;font-weight:normal;letter-spacing:0.000px;letter-spacing:-0.3px;-webkit-text-stroke:0.15px #333539;">LAC</span>
<div class="b" style="left:535.80px;top:718.41px;width:16.19px;height:12.50px;background:#a9dcc6;"></div>
<span class="t" style="top:718.41px;left:555.49px;font-size:10px;line-height:13.0px;color:#333539;font-weight:normal;letter-spacing:0.000px;letter-spacing:0.5px;-webkit-text-stroke:0.15px #333539;">$8</span>
<div class="b" style="left:773.00px;top:714.00px;width:79.60px;height:19.00px;background:#fddcc0;"></div>
<span class="t" style="top:718.41px;left:662.70px;width:300px;text-align:center;font-size:10px;line-height:13.0px;color:#1f2226;font-weight:normal;letter-spacing:0.000px;-webkit-text-stroke:0.22px #1f2226;">2</span>
<div class="b" style="left:5.60px;top:733.10px;width:1126.40px;height:1.00px;background:#e9e9e9;"></div>
<span class="t" style="top:737.60px;left:535.40px;font-size:10px;line-height:13.0px;color:#333539;font-weight:normal;letter-spacing:0.000px;letter-spacing:0.5px;">$497</span>
<div class="b" style="left:5.60px;top:753.00px;width:1126.40px;height:1.00px;background:#ececec;"></div>
<span class="t" style="top:299.30px;left:1164.78px;font-size:14px;line-height:18.2px;color:#6296dc;font-weight:normal;letter-spacing:0.134px;">Total Salary</span>
<span class="t" style="top:319.05px;left:1165.60px;font-size:39px;line-height:50.7px;color:#2c3036;font-weight:normal;letter-spacing:0.000px;-webkit-text-stroke:0.45px #2c3036;transform:scaleX(1.0766);transform-origin:0 0;">$497</span>
<span class="t" style="top:378.82px;left:1164.90px;font-size:11.5px;line-height:14.95px;color:#333539;font-weight:normal;letter-spacing:0.165px;">$3 remaining</span>
<div class="b" style="left:1165.00px;top:408.40px;width:144.00px;height:6.60px;background:#a8dcc5;border-radius:4px;"></div>
<span class="t" style="top:402.18px;left:1315.92px;font-size:14.5px;line-height:18.85px;color:#6296dc;font-weight:normal;letter-spacing:0.172px;word-spacing:2px;">99% of $500 Cap</span>
<span class="t" style="top:478.90px;left:1165.00px;font-size:14px;line-height:18.2px;color:#6296dc;font-weight:normal;letter-spacing:0.211px;">Weekly High Score</span>
<span class="t" style="top:498.25px;left:1162.97px;font-size:39px;line-height:50.7px;color:#2c3036;font-weight:normal;letter-spacing:0.000px;-webkit-text-stroke:0.45px #2c3036;transform:scaleX(1.0376);transform-origin:0 0;">189.9</span>
<span class="t" style="top:525.08px;left:1270.85px;font-size:12.5px;line-height:16.25px;color:#333539;font-weight:normal;letter-spacing:0.291px;">(Week 7)</span>
<div class="b" style="left:1164.40px;top:556.20px;width:60.10px;height:21.80px;background:#d5f0df;border-radius:11px;"></div>
<svg class="b" style="left:1171.50px;top:562.90px" width="8.60" height="8.60" viewBox="0 0 10 10"><path d="M1.200 8.800L8.400 1.600M2.600 1.500h5.900v5.900" fill="none" stroke="#2a8a50" stroke-width="1.300"/></svg>
<span class="t" style="top:557.97px;left:1186.93px;font-size:14.2px;line-height:18.46px;color:#2a8a50;font-weight:normal;letter-spacing:0.884px;">25%</span>
<span class="t" style="top:557.58px;left:1229.75px;font-size:14.5px;line-height:18.85px;color:#6296dc;font-weight:normal;letter-spacing:-0.067px;">above 152.26 average</span>
<svg class="b" style="left:1147.70px;top:615.40px" width="9.80" height="9.80" viewBox="0 0 20 20"><circle cx="10" cy="10" r="8" fill="none" stroke="#444" stroke-width="1.84"/><rect x="9" y="8.800" width="2.100" height="5.600" fill="#444"/><circle cx="10.050" cy="6.100" r="1.300" fill="#444"/></svg>
<span class="t" style="top:633.90px;left:1163.91px;font-size:14px;line-height:18.2px;color:#6296dc;font-weight:normal;letter-spacing:0.149px;">Leading Fantasy Scorer</span>
<span class="t" style="left:1163.9px;top:652.90px;font-size:39px;line-height:52.6px;color:#2c3036;-webkit-text-stroke:0.45px #2c3036;letter-spacing:-0.8px;transform:scaleX(1.03);transform-origin:0 0">29<span style="margin-left:0.3px">1</span></span>
<span class="t" style="top:679.95px;left:1235.39px;font-size:13px;line-height:16.9px;color:#333539;font-weight:normal;letter-spacing:0.128px;">Christian McCaffrey</span>
<span class="t" style="top:712.05px;left:1164.39px;font-size:13px;line-height:16.9px;color:#333539;font-weight:normal;letter-spacing:-0.142px;">(26.4 Avg in 11 G)</span>
<div class="b" style="left:1164.40px;top:737.50px;width:53.80px;height:20.80px;background:#d5f0df;border-radius:11px;"></div>
<svg class="b" style="left:1171.50px;top:743.70px" width="8.60" height="8.60" viewBox="0 0 10 10"><path d="M1.200 8.800L8.400 1.600M2.600 1.500h5.900v5.900" fill="none" stroke="#2a8a50" stroke-width="1.300"/></svg>
<span class="t" style="top:738.77px;left:1186.71px;font-size:14.2px;line-height:18.46px;color:#2a8a50;font-weight:normal;letter-spacing:0.385px;">102</span>
<span class="t" style="top:738.28px;left:1224.20px;font-size:14.5px;line-height:18.85px;color:#6296dc;font-weight:normal;letter-spacing:0.095px;">vs. 189 (Matthew Stafford)</span>
</div></body></html>
